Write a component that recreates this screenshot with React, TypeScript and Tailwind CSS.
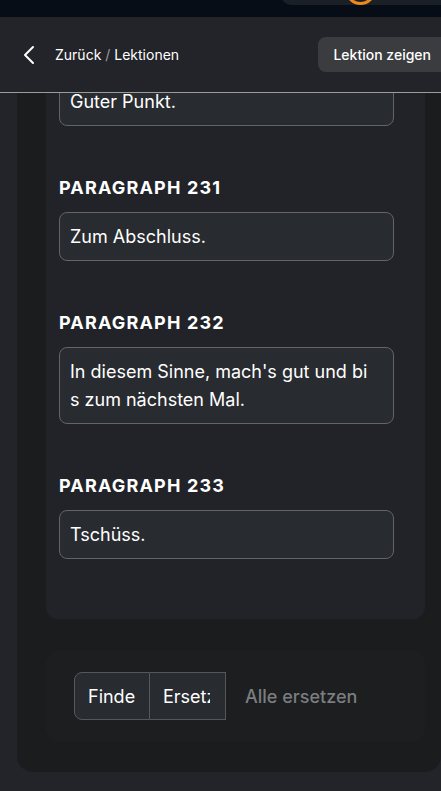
import React from "react";

function Field({ children, className = "" }: { children: React.ReactNode; className?: string }) {
  return (
    <div
      className={
        "rounded-lg border border-[#626468] bg-[#282b30] pl-[10px] pr-[21px] py-[9.5px] text-[18px] leading-[28px] text-white break-all " +
        className
      }
    >
      {children}
    </div>
  );
}

function Heading({ children }: { children: React.ReactNode }) {
  return (
    <div className="mt-[50px] mb-[12px] text-[18px] leading-[24px] font-bold tracking-[0.065em] text-white">
      {children}
    </div>
  );
}

export default function App() {
  return (
    <div className="relative h-[791px] w-[441px] overflow-hidden bg-[#222429] font-['Inter',sans-serif]">
      {/* top band */}
      <div className="relative h-[17px] bg-[#060d16]">
        <div className="absolute left-[280px] top-[-20px] h-[25px] w-[180px] rounded-bl-[12px] bg-[#1b2027]" />
        <div className="absolute left-[345px] top-[-26px] h-[31px] w-[31px] rounded-full border-[3px] border-[#ee8a1c]" />
      </div>

      {/* header */}
      <header className="flex h-[76px] items-center justify-between border-b border-[#9b9c9e] bg-[#222429] pl-[22px]">
        <div className="flex items-center">
          <svg width="14" height="20" viewBox="0 0 14 20" fill="none" className="mr-[19px]">
            <path d="M11 2 L3 10 L11 18" stroke="white" strokeWidth="2" strokeLinecap="round" strokeLinejoin="round" />
          </svg>
          <span className="text-[14px] text-white">
            Zurück <span className="text-[#9a9ca0]">/</span> Lektionen
          </span>
        </div>
        <div className="mr-[-12px] flex h-[35px] items-center rounded-lg bg-[#3a3c40] pl-[15px] pr-[22px] text-[14px] font-medium text-white">
          Lektion zeigen
        </div>
      </header>

      {/* body */}
      <div className="flex">
        <div className="w-[17px] shrink-0" />
        <div className="flex-1 rounded-b-2xl bg-[#1b1c1e] pb-[31px] pl-[29px] pr-[16px]">
          <div className="overflow-hidden rounded-b-xl bg-[#212328] pb-[60px] pl-[13px] pr-[31px]">
            <div className="mt-[-16px]">
              <Field>Guter Punkt.</Field>
            </div>
            <Heading>PARAGRAPH 231</Heading>
            <Field>Zum Abschluss.</Field>
            <Heading>PARAGRAPH 232</Heading>
            <Field>In diesem Sinne, mach's gut und bis zum nächsten Mal.</Field>
            <Heading>PARAGRAPH 233</Heading>
            <Field>Tschüss.</Field>
          </div>

          <div className="mt-[32px] rounded-xl bg-[#1c1e20] py-[21px] pl-[28px]">
            <div className="flex items-center">
              <div className="flex h-[48px] w-[76px] items-center rounded-l-lg border border-[#55575b] bg-[#282b30] pl-[13px] text-[18px] text-white">
                Finde
              </div>
              <div className="flex h-[48px] w-[76px] items-center overflow-hidden border border-l-0 border-[#55575b] bg-[#282b30] pl-[13px] text-[18px] text-white">
                <span className="w-[47px] overflow-hidden whitespace-nowrap">Ersetzen</span>
              </div>
              <div className="ml-[19px] text-[18px] font-medium text-[#7b7d80]">Alle ersetzen</div>
            </div>
          </div>
        </div>
      </div>
    </div>
  );
}
